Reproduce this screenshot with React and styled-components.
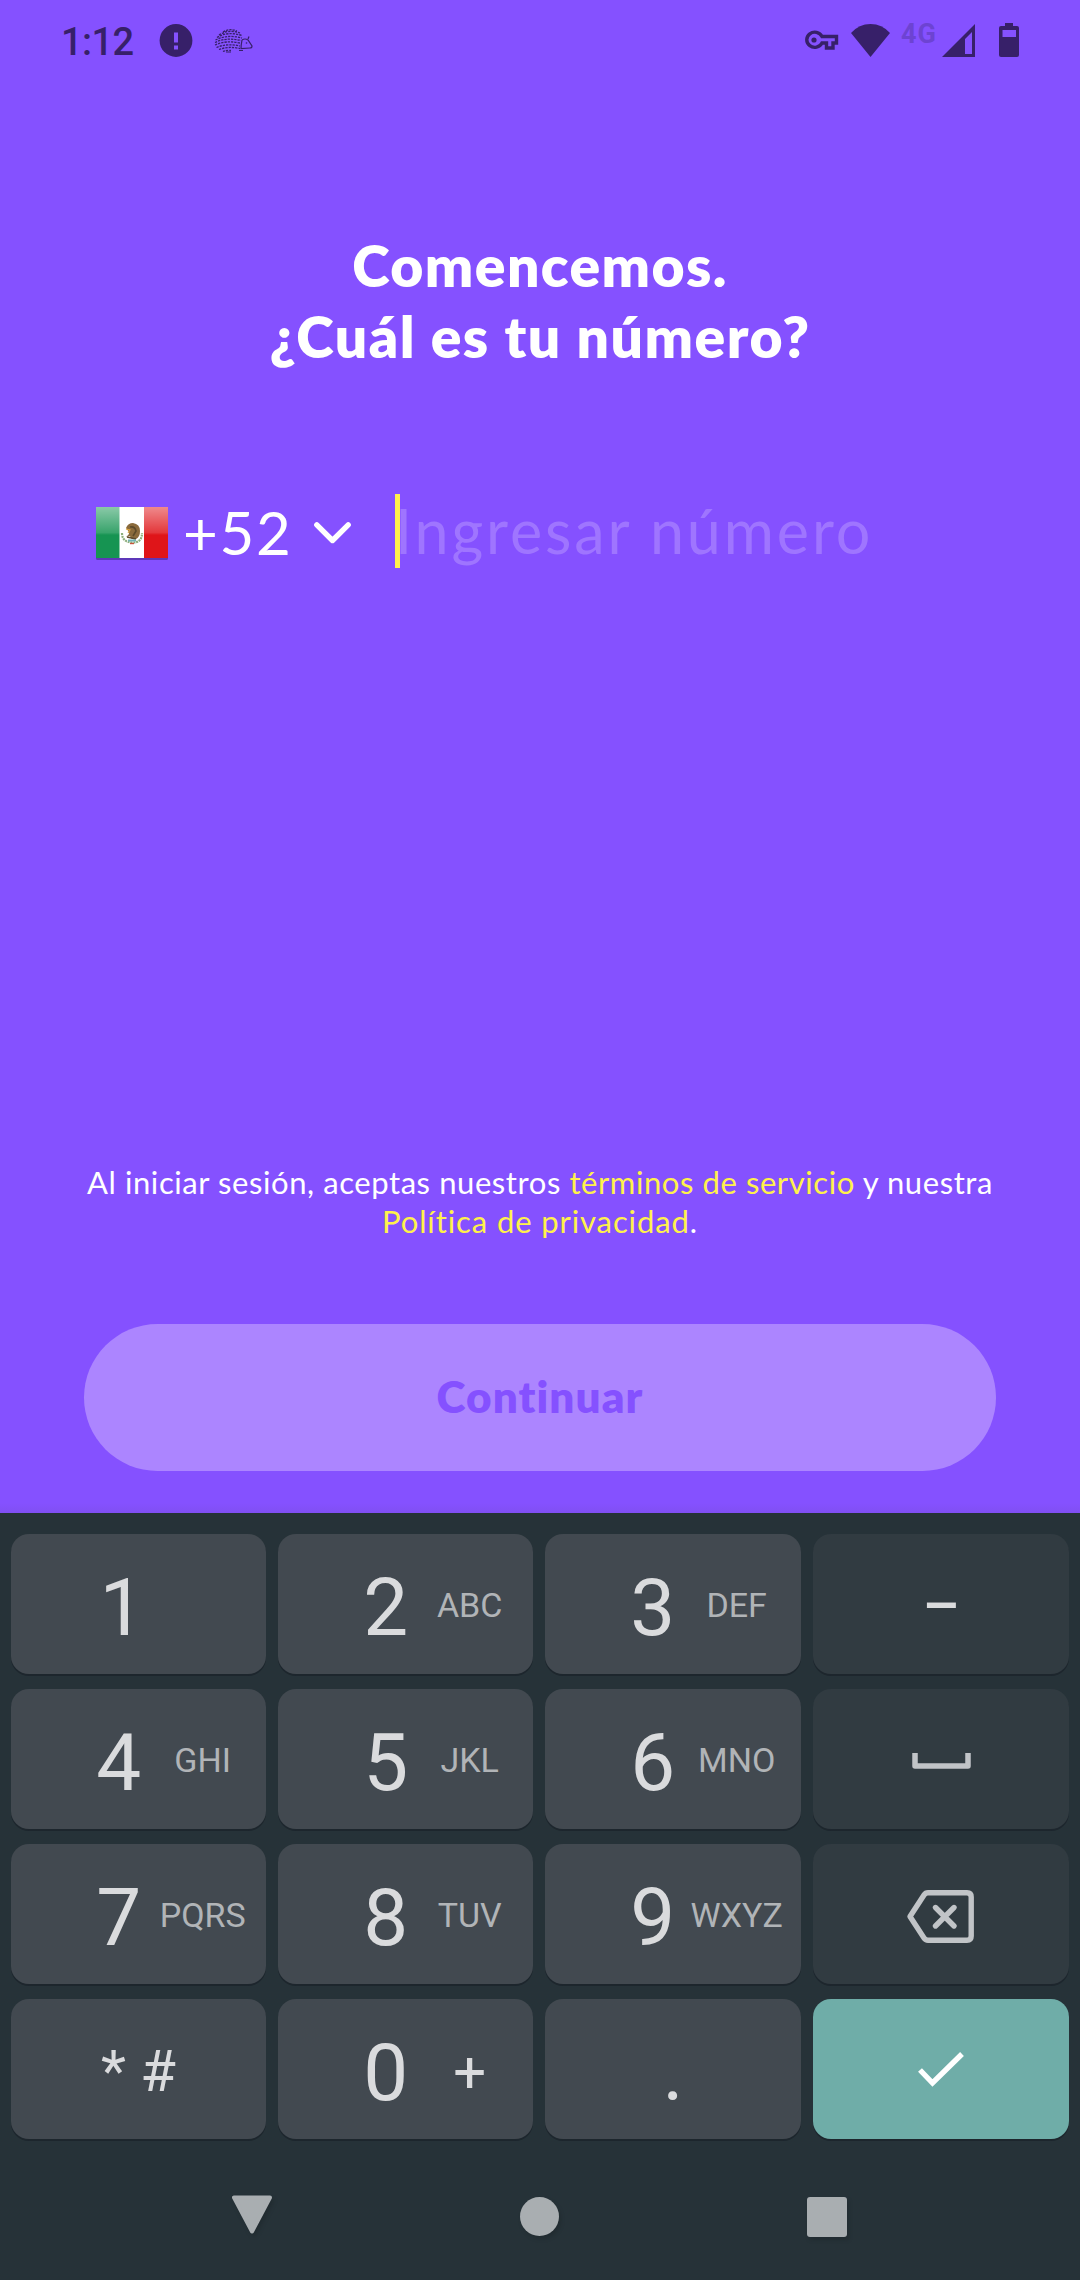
import React from 'react';
import styled, { createGlobalStyle } from 'styled-components';

const brand = "Lato, 'Open Sans', sans-serif";
const system = "Roboto, 'Noto Sans', sans-serif";

const GlobalStyle = createGlobalStyle`
  * { box-sizing: border-box; }
  body { margin: 0; background: #263238; }
  button { border: 0; margin: 0; padding: 0; background: none; font: inherit; color: inherit; }
  svg { display: block; flex: none; overflow: visible; }
`;

const Screen = styled.div`
  width: 1080px;
  height: 2280px;
  display: flex;
  flex-direction: column;
  background: #263238;
  overflow: hidden;
`;

const SignUp = styled.main`
  height: 1513px;
  flex: none;
  display: flex;
  flex-direction: column;
  background: linear-gradient(#8551ff 0 1503px, #804ff2 1513px);
  color: #fff;
  font-family: ${brand};
`;

const StatusBar = styled.header`
  height: 80px;
  flex: none;
  display: flex;
  align-items: center;
  justify-content: space-between;
  padding: 0 61px 0 61px;
  color: #372069;
  font-family: ${system};
`;

const StatusGroup = styled.div`
  display: flex;
  align-items: center;
`;

const Clock = styled.span`
  width: 98px;
  font-size: 38px;
  line-height: 44px;
  font-weight: 500;
  padding-top: 4px;
  letter-spacing: -0.6px;
`;

const Network = styled.span`
  width: 41px;
  margin-left: 11px;
  padding-bottom: 12px;
  color: #6d43d2;
  font-size: 27px;
  line-height: 30px;
  font-weight: 700;
  letter-spacing: 1px;
`;

const Title = styled.h1`
  margin: 150px 0 0;
  text-align: center;
  font-size: 57px;
  line-height: 71px;
  font-weight: 800;
`;

const TitleLine = styled.span`
  display: block;
  letter-spacing: ${(p) => p.$track}px;
`;

const PhoneRow = styled.div`
  height: 74px;
  margin-top: 122px;
  padding-left: 96px;
  display: flex;
  align-items: center;
`;

const CountryPicker = styled.button`
  width: 299px;
  display: flex;
  align-items: center;
`;

const DialCode = styled.span`
  width: 131px;
  margin-left: 15px;
  text-align: left;
  font-size: 60px;
  line-height: 74px;
  padding-top: 2px;
  letter-spacing: 1.7px;
`;

const Caret = styled.span`
  width: 5px;
  height: 74px;
  background: #fff14b;
`;

const Placeholder = styled.span`
  color: #9f75ff;
  font-size: 61px;
  line-height: 74px;
  letter-spacing: 2.9px;
  margin-left: -5px;
  padding-bottom: 1px;
`;

const Legal = styled.p`
  margin: auto 0 0;
  text-align: center;
  font-size: 31px;
  line-height: 39px;
`;

const LegalLine = styled.span`
  display: block;
  letter-spacing: ${(p) => p.$track}px;
`;

const LegalLink = styled.a`
  color: #fff14b;
`;

const ContinueButton = styled.button`
  height: 147px;
  flex: none;
  margin: 83px 84px 42px;
  padding-bottom: 3px;
  border-radius: 74px;
  background: #ac85ff;
  color: #8551ff;
  font-size: 44px;
  font-weight: 800;
  letter-spacing: 1.1px;
`;

const Keyboard = styled.section`
  flex: none;
  display: grid;
  grid-template-columns: 255px 255px 256px 256px;
  grid-auto-rows: 140px;
  gap: 15px 12px;
  padding: 21px 11px 0;
  font-family: ${system};
`;

const keyTones = { digit: '#424950', side: '#313b41', done: '#6fada8' };

const Key = styled.button`
  display: flex;
  align-items: center;
  justify-content: center;
  border-radius: 18px;
  background: ${(p) => keyTones[p.$tone]};
  box-shadow: 0 2px 0 #1d262d;
  color: #dadbdd;
  font-family: ${system};
`;

const DigitKey = styled(Key)`
  justify-content: flex-start;
`;

const Digit = styled.span`
  width: 90px;
  margin-left: ${(p) => (p.$alone ? 66 : 62.7)}px;
  padding-top: 8px;
  text-align: center;
  font-size: 80px;
  line-height: 94px;
`;

const Letters = styled.span`
  width: 110px;
  margin-left: -16px;
  padding-top: 2px;
  text-align: center;
  color: #b1b4b7;
  font-size: 34px;
  line-height: 40px;
  white-space: nowrap;
`;

const Symbol = styled.span`
  font-size: ${(p) => p.$size || 58}px;
  font-weight: ${(p) => p.$weight || 400};
  line-height: 94px;
  padding-top: ${(p) => p.$drop || 3}px;
`;

const PlusSign = styled(Symbol)`
  width: 110px;
  margin-left: -16px;
  padding-top: 6px;
  text-align: center;
`;

const GlyphSlot = styled.span`
  display: flex;
  padding: ${(p) => p.$drop || 0}px ${(p) => p.$nudge || 0}px 0 0;
`;

const NavBar = styled.nav`
  flex: 1;
  display: flex;
  justify-content: center;
  align-items: center;
  gap: 247.5px;
  padding: 14px 3px 0 0;
`;

const NavIcon = styled.svg`
  margin-top: ${(p) => p.$lift || 0}px;
  filter: drop-shadow(2px 3px 2px rgba(0, 0, 0, 0.14));
`;

const HedgehogSvg = styled.svg`
  margin: 2px 0 0 21px;
`;

const WifiSvg = styled.svg`
  margin-left: 12px;
`;

const BatterySvg = styled.svg`
  margin-left: 24px;
`;

const FlagSvg = styled.svg`
  margin-top: 3px;
`;

const ChevronSvg = styled.svg`
  margin-top: 3px;
`;

function AlertIcon() {
  return (
    <svg width="34" height="34" viewBox="0 0 34 34">
      <circle cx="17" cy="17.500" r="16.400" fill="#372069" />
      <path d="M15 9.500h4v10h-4zM15 22.500h4v4h-4z" fill="#8551ff" />
    </svg>
  );
}

function HedgehogIcon() {
  return (
    <HedgehogSvg width="39" height="24" viewBox="0 0 39 24" fill="none" stroke="#372069">
      <path
        d="M9 3Q16-1 23 2M5 6Q14 0 26 4M3 8.500Q13 2 28 6.500M1.500 11Q13 5 28 9M1 13.500Q12 8 27 11.500M1 16Q12 11 26 14M2.500 18.500Q13 14 26 17M5 20.500Q14 17 26 19.500M9 22.500Q12 21 17 21.500"
        strokeWidth="1.300"
        strokeDasharray="2.300 1"
      />
      <path d="M28 11q3-2 6 0l4 6q0 2-2 2l-9 .5q0-3 1-8.500M25 21.500h4M12 23h5M34 10l1-2.500" strokeWidth="1.200" />
      <circle cx="32.500" cy="14" r=".8" fill="#372069" stroke="none" />
    </HedgehogSvg>
  );
}

function KeyIcon() {
  return (
    <svg width="34" height="20" viewBox="0 0 34 20">
      <path d="M17 6.500H31.500V13H28V18H21.500V13H17A8 7.600 0 1 1 17 6.500Z" fill="none" stroke="#372069" strokeWidth="3.400" />
      <circle cx="9" cy="10" r="2.600" fill="#372069" />
    </svg>
  );
}

function WifiIcon() {
  return (
    <WifiSvg width="39" height="33" viewBox="0 0 39 33">
      <path d="M0 9Q8 0 19.500 0T39 9L19.500 33Z" fill="#372069" />
    </WifiSvg>
  );
}

function SignalIcon() {
  return (
    <svg width="33" height="33" viewBox="0 0 33 33">
      <path d="M33 0V33H0ZM30 8L23 15V30H30Z" fill="#372069" fillRule="evenodd" />
    </svg>
  );
}

function BatteryIcon() {
  return (
    <BatterySvg width="20" height="34" viewBox="0 0 20 34">
      <path d="M6 0H14V3H18Q20 3 20 5V32Q20 34 18 34H2Q0 34 0 32V5Q0 3 2 3H6ZM3.500 7V14H17V7Z" fill="#372069" fillRule="evenodd" />
    </BatterySvg>
  );
}

function MexicoFlag() {
  return (
    <FlagSvg width="72" height="52" viewBox="0 0 72 52">
      <defs>
        <linearGradient id="gloss" x1="0" y1="0" x2="0" y2="1">
          <stop offset="0" stopColor="#fff" stopOpacity=".5" />
          <stop offset=".5" stopColor="#fff" stopOpacity=".15" />
          <stop offset=".55" stopColor="#fff" stopOpacity="0" />
        </linearGradient>
      </defs>
      <rect x="0" y="1" width="72" height="52" rx="1.500" fill="#3d2380" opacity=".55" />
      <rect width="24" height="51" fill="#169452" />
      <rect x="23.500" width="25" height="51" fill="#fff" />
      <rect x="48" width="24" height="51" fill="#df1519" />
      <rect width="72" height="51" fill="url(#gloss)" />
      <path d="M26 26q0 9 10 9.500t10-9.500" fill="none" stroke="#8dae7b" strokeWidth="2.200" strokeDasharray="2 .8" />
      <path d="M30 21q2-5 7-5 7 1 7 8 0 6-4 8-5 1-6-3l-4 1q4-3 3-5z" fill="#8a6a3c" />
      <path d="M34 20q5-1 6 4l-3 5M31 30l9 2" fill="none" stroke="#5d4a2a" strokeWidth="1.600" />
      <path d="M30 22l4 1-2 3" fill="none" stroke="#d9a23c" strokeWidth="1.200" />
      <path d="M32 33.500h8" stroke="#6fb1b5" strokeWidth="2" />
      <path d="M34 36.500h4" stroke="#c6543f" strokeWidth="1.400" />
    </FlagSvg>
  );
}

function Chevron() {
  return (
    <ChevronSvg width="37" height="22" viewBox="0 0 37 22">
      <path d="M2.800 2.800L18.500 18.500L34.200 2.800" fill="none" stroke="#fff" strokeWidth="5.400" strokeLinecap="round" strokeLinejoin="round" />
    </ChevronSvg>
  );
}

function SpaceIcon() {
  return (
    <svg width="59" height="16" viewBox="0 0 59 16">
      <path d="M3 0V13H56V0" fill="none" stroke="#c1c4c7" strokeWidth="5.500" strokeLinejoin="round" />
    </svg>
  );
}

function BackspaceIcon() {
  return (
    <svg width="67" height="53" viewBox="0 0 67 53">
      <path d="M21 2.800H60Q64.200 2.800 64.200 7V46Q64.200 50.200 60 50.200H21Q18.500 50.200 17 48L3 26.500L17 5Q18.500 2.800 21 2.800Z" fill="none" stroke="#c1c4c7" strokeWidth="5.400" strokeLinejoin="round" />
      <path d="M28.500 17.500L47 36M47 17.500L28.500 36" stroke="#c1c4c7" strokeWidth="5.400" strokeLinecap="round" />
    </svg>
  );
}

function CheckIcon() {
  return (
    <svg width="46" height="35" viewBox="0 0 46 35">
      <path d="M2 18L14.500 31L44 2" fill="none" stroke="#fff" strokeWidth="5.400" />
    </svg>
  );
}

function DigitCell({ digit, letters, plus }) {
  return (
    <DigitKey $tone="digit">
      <Digit $alone={!letters && !plus}>{digit}</Digit>
      {letters && <Letters>{letters}</Letters>}
      {plus && <PlusSign>+</PlusSign>}
    </DigitKey>
  );
}

export default function App() {
  return (
    <Screen>
      <GlobalStyle />
      <SignUp>
        <StatusBar>
          <StatusGroup>
            <Clock>1:12</Clock>
            <AlertIcon />
            <HedgehogIcon />
          </StatusGroup>
          <StatusGroup>
            <KeyIcon />
            <WifiIcon />
            <Network>4G</Network>
            <SignalIcon />
            <BatteryIcon />
          </StatusGroup>
        </StatusBar>
        <Title>
          <TitleLine $track={1.4}>Comencemos.</TitleLine>
          <TitleLine $track={1.5}>¿Cuál es tu número?</TitleLine>
        </Title>
        <PhoneRow>
          <CountryPicker>
            <MexicoFlag />
            <DialCode>+52</DialCode>
            <Chevron />
          </CountryPicker>
          <Caret />
          <Placeholder>Ingresar número</Placeholder>
        </PhoneRow>
        <Legal>
          <LegalLine $track={0.58}>
            Al iniciar sesión, aceptas nuestros <LegalLink>términos de servicio</LegalLink> y nuestra
          </LegalLine>
          <LegalLine $track={0.9}>
            <LegalLink>Política de privacidad</LegalLink>.
          </LegalLine>
        </Legal>
        <ContinueButton>Continuar</ContinueButton>
      </SignUp>
      <Keyboard>
        <DigitCell digit="1" />
        <DigitCell digit="2" letters="ABC" />
        <DigitCell digit="3" letters="DEF" />
        <Key $tone="side"><Symbol $weight={500} $drop={4}>–</Symbol></Key>
        <DigitCell digit="4" letters="GHI" />
        <DigitCell digit="5" letters="JKL" />
        <DigitCell digit="6" letters="MNO" />
        <Key $tone="side"><GlyphSlot $drop={4}><SpaceIcon /></GlyphSlot></Key>
        <DigitCell digit="7" letters="PQRS" />
        <DigitCell digit="8" letters="TUV" />
        <DigitCell digit="9" letters="WXYZ" />
        <Key $tone="side"><GlyphSlot $drop={5} $nudge={2}><BackspaceIcon /></GlyphSlot></Key>
        <Key $tone="digit"><Symbol>* #</Symbol></Key>
        <DigitCell digit="0" plus />
        <Key $tone="digit"><Symbol $size={80} $drop={8}>.</Symbol></Key>
        <Key $tone="done"><CheckIcon /></Key>
      </Keyboard>
      <NavBar>
        <NavIcon $lift={-5} width="42" height="39" viewBox="0 0 42 39">
          <path d="M3 2.500H39L21 36.500Z" fill="#a9aeb1" stroke="#a9aeb1" strokeWidth="4" strokeLinejoin="round" />
        </NavIcon>
        <NavIcon width="39" height="39" viewBox="0 0 39 39">
          <circle cx="19.500" cy="19.500" r="19.500" fill="#a9aeb1" />
        </NavIcon>
        <NavIcon width="40" height="40" viewBox="0 0 40 40">
          <rect width="40" height="40" rx="3" fill="#a9aeb1" />
        </NavIcon>
      </NavBar>
    </Screen>
  );
}
